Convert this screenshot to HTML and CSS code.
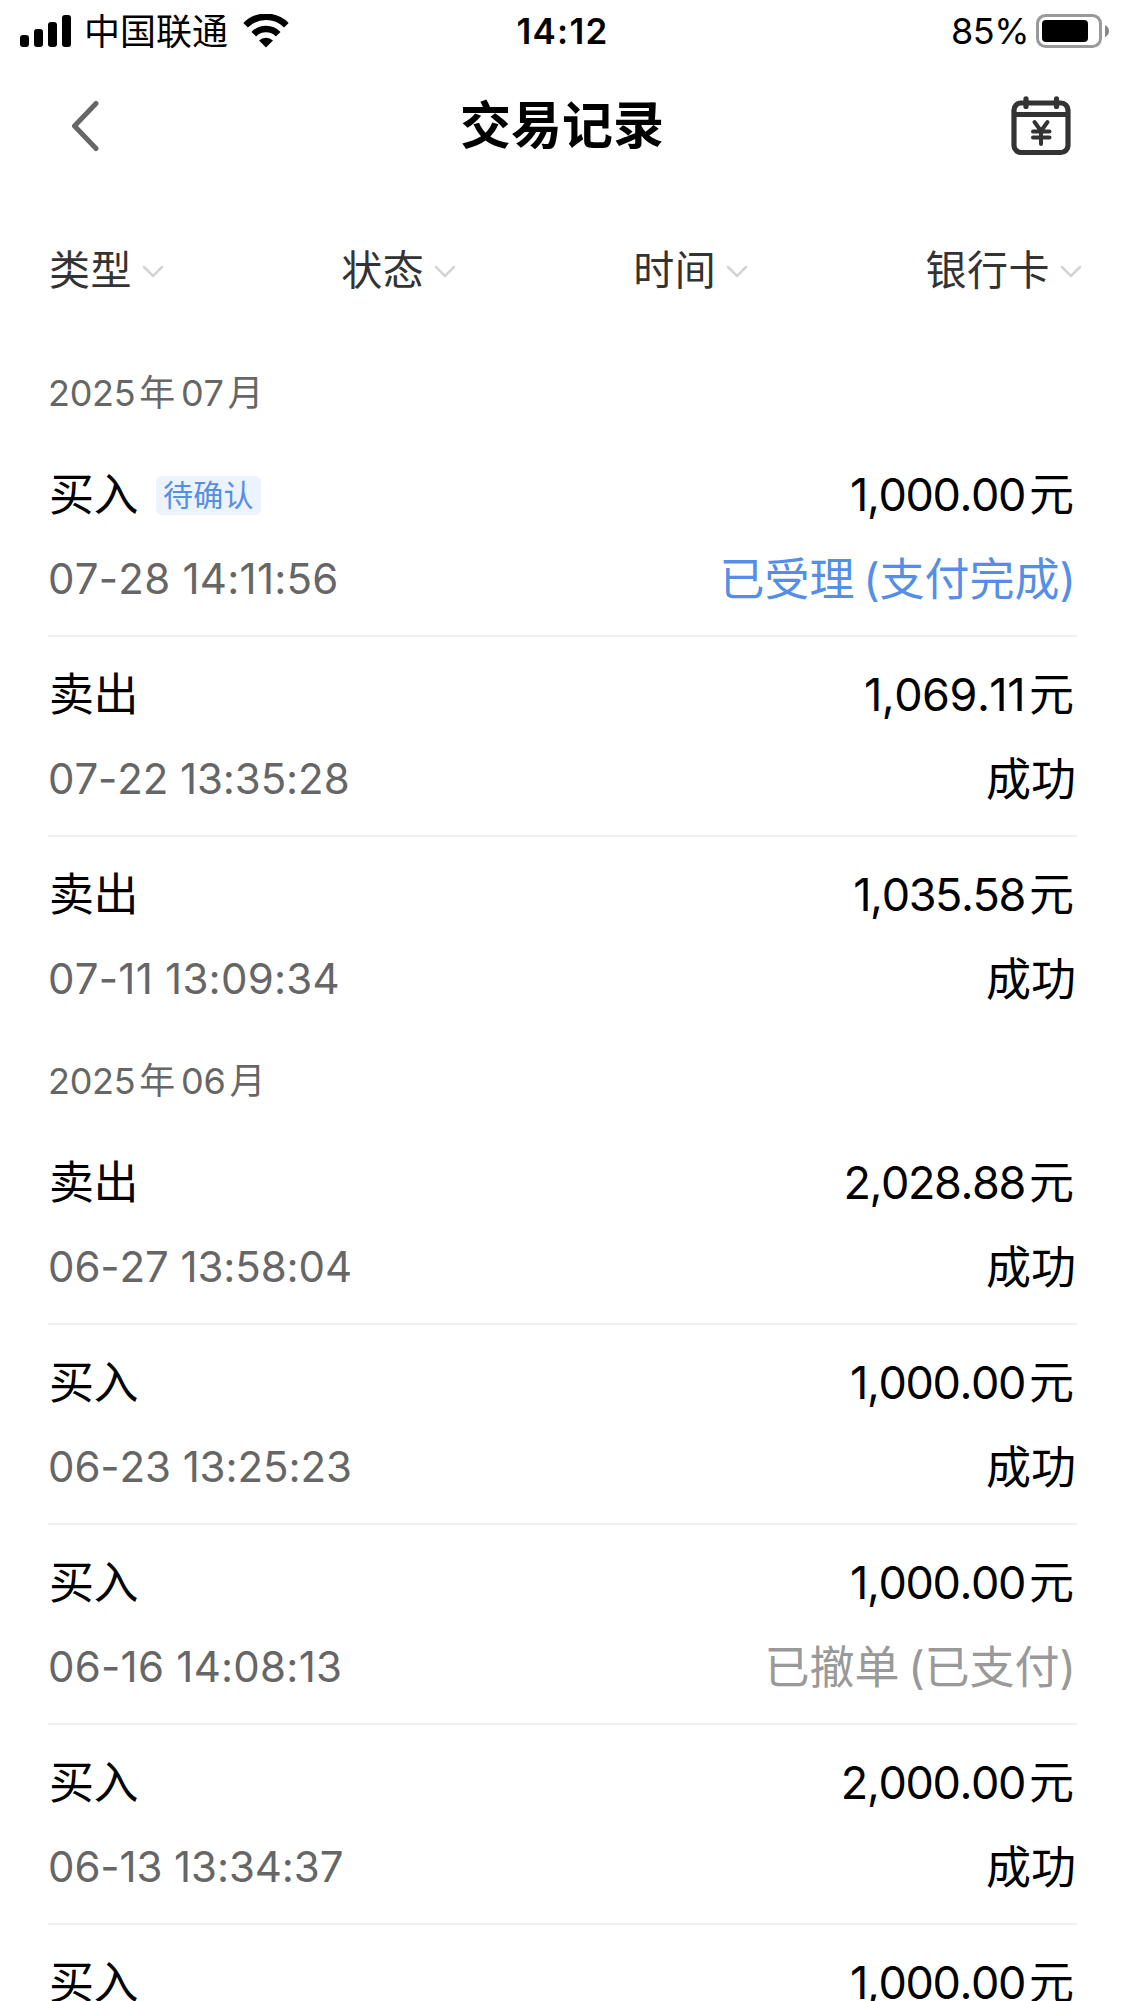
FILE: index.html
```html
<!DOCTYPE html>
<html lang="zh-CN">
<head>
    <meta charset="UTF-8">
    <meta name="viewport" content="width=device-width, initial-scale=1.0">
    <title>交易记录</title>
    <link rel="stylesheet" href="styles.css">
</head>
<body>
    <div class="status-bar">
        <div class="status-left">
            <svg class="signal-icon" width="51" height="32" viewBox="0 0 51 32">
                <rect x="0" y="20" width="9" height="12" rx="3"/>
                <rect x="14" y="14" width="9" height="18" rx="3"/>
                <rect x="28" y="7" width="9" height="25" rx="3"/>
                <rect x="42" y="0" width="9" height="32" rx="3"/>
            </svg>
            <span class="carrier">中国联通</span>
            <svg class="wifi-icon" width="46" height="34" viewBox="0 0 46 34">
                <path d="M2.6 11.2 A29 29 0 0 1 43.4 11.2" fill="none" stroke="#000" stroke-width="6.5"/>
                <path d="M10.8 20.2 A17 17 0 0 1 35.2 20.2" fill="none" stroke="#000" stroke-width="6.5"/>
                <path d="M16 26.5 A10 10 0 0 1 30 26.5 L23 33.5 Z"/>
            </svg>
        </div>
        <div class="status-time">14:12</div>
        <div class="status-right">
            <span class="battery-text">85%</span>
            <svg class="battery-icon" width="74" height="34" viewBox="0 0 74 34">
                <rect x="1.5" y="1.5" width="63" height="31" rx="8" fill="none" stroke="#999" stroke-width="3"/>
                <rect x="6" y="6" width="46" height="22" rx="4"/>
                <path d="M69 11 Q73 13 73 17 Q73 21 69 23 Z" fill="#888"/>
            </svg>
        </div>
    </div>

    <header class="nav-bar">
        <svg class="back-icon" width="28" height="52" viewBox="0 0 28 52">
            <path d="M25 3.5 L3.5 26 L25 48.5" fill="none" stroke="#666" stroke-width="5" stroke-linecap="round" stroke-linejoin="round"/>
        </svg>
        <h1 class="nav-title">交易记录</h1>
        <svg class="calendar-icon" width="60" height="60" viewBox="0 0 60 60" fill="none" stroke="#333" stroke-width="5.2" stroke-linecap="round">
            <rect x="3" y="7" width="54" height="49.5" rx="7"/>
            <path d="M4 18.5 H56" stroke-linecap="butt"/>
            <path d="M15 2.8 V10.5 M45.5 2.8 V10.5"/>
            <path d="M23.5 26 L30 35 L36.5 26 M30 35 V48 M22 35.5 H38.5 M22 41.5 H38.5" stroke-width="4" stroke-linejoin="round"/>
        </svg>
    </header>

    <nav class="filters">
        <div class="filter">类型<svg class="arrow" width="22" height="14" viewBox="0 0 22 14"><path d="M2 2 L11 11 L20 2"/></svg></div>
        <div class="filter">状态<svg class="arrow" width="22" height="14" viewBox="0 0 22 14"><path d="M2 2 L11 11 L20 2"/></svg></div>
        <div class="filter">时间<svg class="arrow" width="22" height="14" viewBox="0 0 22 14"><path d="M2 2 L11 11 L20 2"/></svg></div>
        <div class="filter">银行卡<svg class="arrow" width="22" height="14" viewBox="0 0 22 14"><path d="M2 2 L11 11 L20 2"/></svg></div>
    </nav>

    <main class="records">
        <section class="month">
            <h2 class="month-title">2025<span class="unit">年</span>07<span class="unit">月</span></h2>
            <div class="record">
                <div class="line">
                    <span class="type">买入<span class="tag">待确认</span></span>
                    <span class="amount">1,000.00<span class="yuan">元</span></span>
                </div>
                <div class="line">
                    <span class="date date-wide">07-28 14:11:56</span>
                    <span class="state pending">已受理 (支付完成)</span>
                </div>
            </div>
            <div class="record">
                <div class="line">
                    <span class="type">卖出</span>
                    <span class="amount amount-wide">1,069.11<span class="yuan">元</span></span>
                </div>
                <div class="line">
                    <span class="date">07-22 13:35:28</span>
                    <span class="state">成功</span>
                </div>
            </div>
            <div class="record">
                <div class="line">
                    <span class="type">卖出</span>
                    <span class="amount">1,035.58<span class="yuan">元</span></span>
                </div>
                <div class="line">
                    <span class="date date-wide">07-11 13:09:34</span>
                    <span class="state">成功</span>
                </div>
            </div>
        </section>

        <section class="month">
            <h2 class="month-title">2025<span class="unit">年</span>06<span class="unit">月</span></h2>
            <div class="record">
                <div class="line">
                    <span class="type">卖出</span>
                    <span class="amount">2,028.88<span class="yuan">元</span></span>
                </div>
                <div class="line">
                    <span class="date">06-27 13:58:04</span>
                    <span class="state">成功</span>
                </div>
            </div>
            <div class="record">
                <div class="line">
                    <span class="type">买入</span>
                    <span class="amount">1,000.00<span class="yuan">元</span></span>
                </div>
                <div class="line">
                    <span class="date">06-23 13:25:23</span>
                    <span class="state">成功</span>
                </div>
            </div>
            <div class="record">
                <div class="line">
                    <span class="type">买入</span>
                    <span class="amount">1,000.00<span class="yuan">元</span></span>
                </div>
                <div class="line">
                    <span class="date date-wide">06-16 14:08:13</span>
                    <span class="state cancelled">已撤单 (已支付)</span>
                </div>
            </div>
            <div class="record">
                <div class="line">
                    <span class="type">买入</span>
                    <span class="amount">2,000.00<span class="yuan">元</span></span>
                </div>
                <div class="line">
                    <span class="date">06-13 13:34:37</span>
                    <span class="state">成功</span>
                </div>
            </div>
            <div class="record">
                <div class="line">
                    <span class="type">买入</span>
                    <span class="amount">1,000.00<span class="yuan">元</span></span>
                </div>
            </div>
        </section>
    </main>
</body>
</html>
```
FILE: styles.css
```css
* {
    margin: 0;
    padding: 0;
    box-sizing: border-box;
}

body {
    font-family: Inter, 'Noto Sans CJK SC', sans-serif;
    font-kerning: none;
    background: #fff;
    color: #000;
    height: 2001px;
    overflow: hidden;
}

svg {
    display: block;
    flex-shrink: 0;
}

/* Status bar */
.status-bar {
    display: grid;
    grid-template-columns: 1fr auto 1fr;
    align-items: center;
    height: 60px;
    padding: 0 15px 0 20px;
    font-size: 36px;
    line-height: 60px;
}

.status-left,
.status-right {
    display: flex;
    align-items: center;
}

.status-right {
    justify-content: flex-end;
}

.carrier {
    margin: 0 15px 0 13px;
    padding-top: 2px;
}

.status-time {
    padding-right: 5px;
    font-size: 35px;
    font-weight: 600;
    letter-spacing: 1.2px;
}

.battery-text {
    margin-right: 7px;
    letter-spacing: -0.5px;
}

/* Navigation */
.nav-bar {
    display: flex;
    align-items: center;
    justify-content: space-between;
    height: 132px;
    padding: 0 54px 0 71px;
}

.nav-title {
    padding: 0 0 0 14px;
    font-size: 51px;
    font-weight: 700;
    line-height: 132px;
}

/* Filters */
.filters {
    display: flex;
    justify-content: space-between;
    height: 157px;
    padding: 48px 43px 0 49px;
}

.filter {
    display: flex;
    align-items: center;
    height: 60px;
    font-size: 41px;
    line-height: 60px;
    letter-spacing: 0.5px;
    color: #333;
}

.arrow {
    margin: 4px 0 0 10px;
    fill: none;
    stroke: #d4d4d4;
    stroke-width: 2.5;
    stroke-linecap: round;
}

/* Records */
.records {
    padding: 0 48px;
}

.month-title {
    height: 88px;
    font-size: 36px;
    font-weight: 400;
    line-height: 88px;
    letter-spacing: -0.3px;
    color: #666;
}

.unit {
    margin: 0 6px 0 4px;
}

.record {
    display: flex;
    flex-direction: column;
    gap: 24px;
    height: 200px;
    padding-top: 28px;
    border-bottom: 2px solid #efefef;
}

.record:last-child {
    border-bottom: none;
}

.line {
    display: flex;
    align-items: center;
    justify-content: space-between;
    height: 60px;
    font-size: 45px;
    line-height: 60px;
}

.type {
    display: flex;
    align-items: center;
    letter-spacing: -0.5px;
    padding-left: 1px;
}

.tag {
    height: 39px;
    margin-left: 18px;
    padding: 0 7px;
    border-radius: 6px;
    background: #ecf3fd;
    color: #558ee6;
    font-size: 30px;
    line-height: 39px;
    letter-spacing: 0.3px;
}

.amount {
    padding-right: 4px;
    letter-spacing: -1.4px;
}

/* amounts with several narrow 1s need more air */
.amount-wide {
    letter-spacing: -0.5px;
}

.yuan {
    margin-left: 4px;
    letter-spacing: -1px;
}

.date {
    font-size: 42px;
    letter-spacing: -0.1px;
    color: #666;
}

.date-wide {
    letter-spacing: 0.25px;
}

.state {
    padding: 1px 1px 0 0;
    word-spacing: -4px;
}

.pending {
    color: #558ee6;
}

.cancelled {
    color: #999;
}
```
